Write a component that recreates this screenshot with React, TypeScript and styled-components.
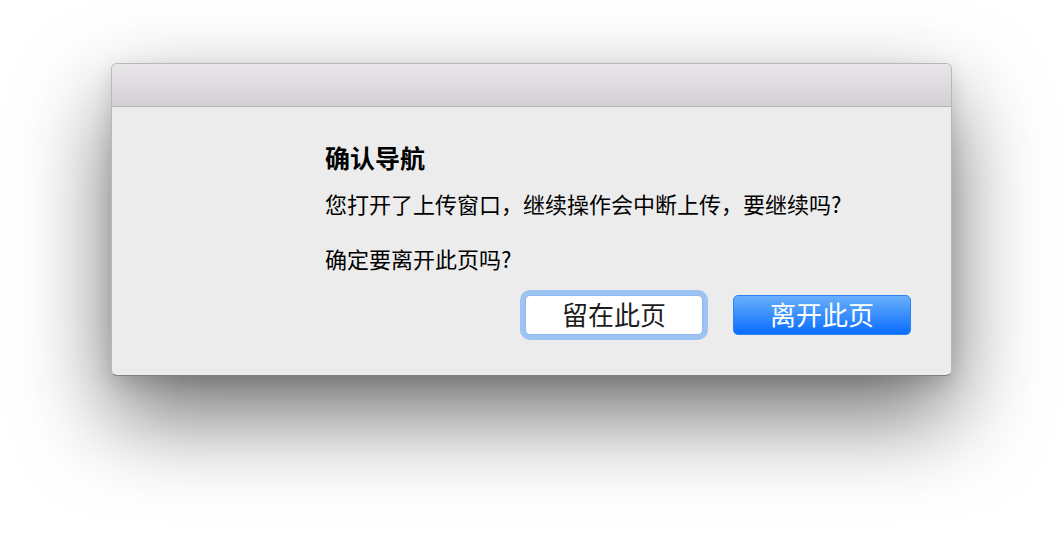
import React from "react";
import styled, { createGlobalStyle } from "styled-components";

const GlobalStyle = createGlobalStyle`
  html, body {
    margin: 0;
    padding: 0;
    background: #ffffff;
  }
  body {
    font-family: "Noto Sans CJK SC", "Noto Sans", sans-serif;
    -webkit-font-smoothing: antialiased;
  }
`;

const Page = styled.div`
  width: 1064px;
  height: 536px;
  box-sizing: border-box;
  padding: 63px 0 0 111px;
  overflow: hidden;
`;

const Window = styled.div`
  width: 841px;
  height: 313px;
  box-sizing: border-box;
  display: flex;
  flex-direction: column;
  background: #ececec;
  border: 1px solid rgba(0, 0, 0, 0.22);
  border-bottom-color: rgba(0, 0, 0, 0.45);
  border-radius: 6px;
  overflow: hidden;
  box-shadow: 0 40px 90px rgba(0, 0, 0, 0.56), 0 8px 20px rgba(0, 0, 0, 0.12);
`;

const TitleBar = styled.div`
  height: 42px;
  flex: none;
  background: linear-gradient(to bottom, #e9e7e9, #d2d0d2);
  border-bottom: 1px solid #b3b3b3;
`;

const Content = styled.div`
  flex: 1;
  display: flex;
  flex-direction: column;
  padding: 35px 40px 0 213px;
`;

const Title = styled.h1`
  margin: 0;
  font-size: 25px;
  line-height: 30px;
  font-weight: 700;
  color: #000;
`;

const Message = styled.p<{ $gap: number }>`
  margin: ${(p) => p.$gap}px 0 0;
  font-size: 22px;
  line-height: 30px;
  color: #000;
  white-space: nowrap;
`;

const ButtonRow = styled.div`
  margin-top: 22px;
  display: flex;
  justify-content: flex-end;
  gap: 30px;
`;

const Button = styled.button<{ $primary?: boolean }>`
  width: 178px;
  height: 40px;
  box-sizing: border-box;
  border-radius: 5px;
  font-family: "Noto Sans CJK SC", "Noto Sans", sans-serif;
  font-size: 26px;
  line-height: 1;
  padding: 0 0 2px;
  cursor: default;
  ${(p) =>
    p.$primary
      ? `
    color: #ffffff;
    background: linear-gradient(to bottom, #69b0fa, #0a6dff);
    border: 1px solid #2a84f6;
  `
      : `
    color: #1d1d1d;
    background: #ffffff;
    border: 1px solid #8fb9ee;
    box-shadow: 0 0 0 5px #9cc3f1;
  `}
`;

export default function App() {
  return (
    <>
      <GlobalStyle />
      <Page>
        <Window>
          <TitleBar />
          <Content>
            <Title>确认导航</Title>
            <Message $gap={16}>您打开了上传窗口，继续操作会中断上传，要继续吗?</Message>
            <Message $gap={25}>确定要离开此页吗?</Message>
            <ButtonRow>
              <Button>留在此页</Button>
              <Button $primary>离开此页</Button>
            </ButtonRow>
          </Content>
        </Window>
      </Page>
    </>
  );
}
